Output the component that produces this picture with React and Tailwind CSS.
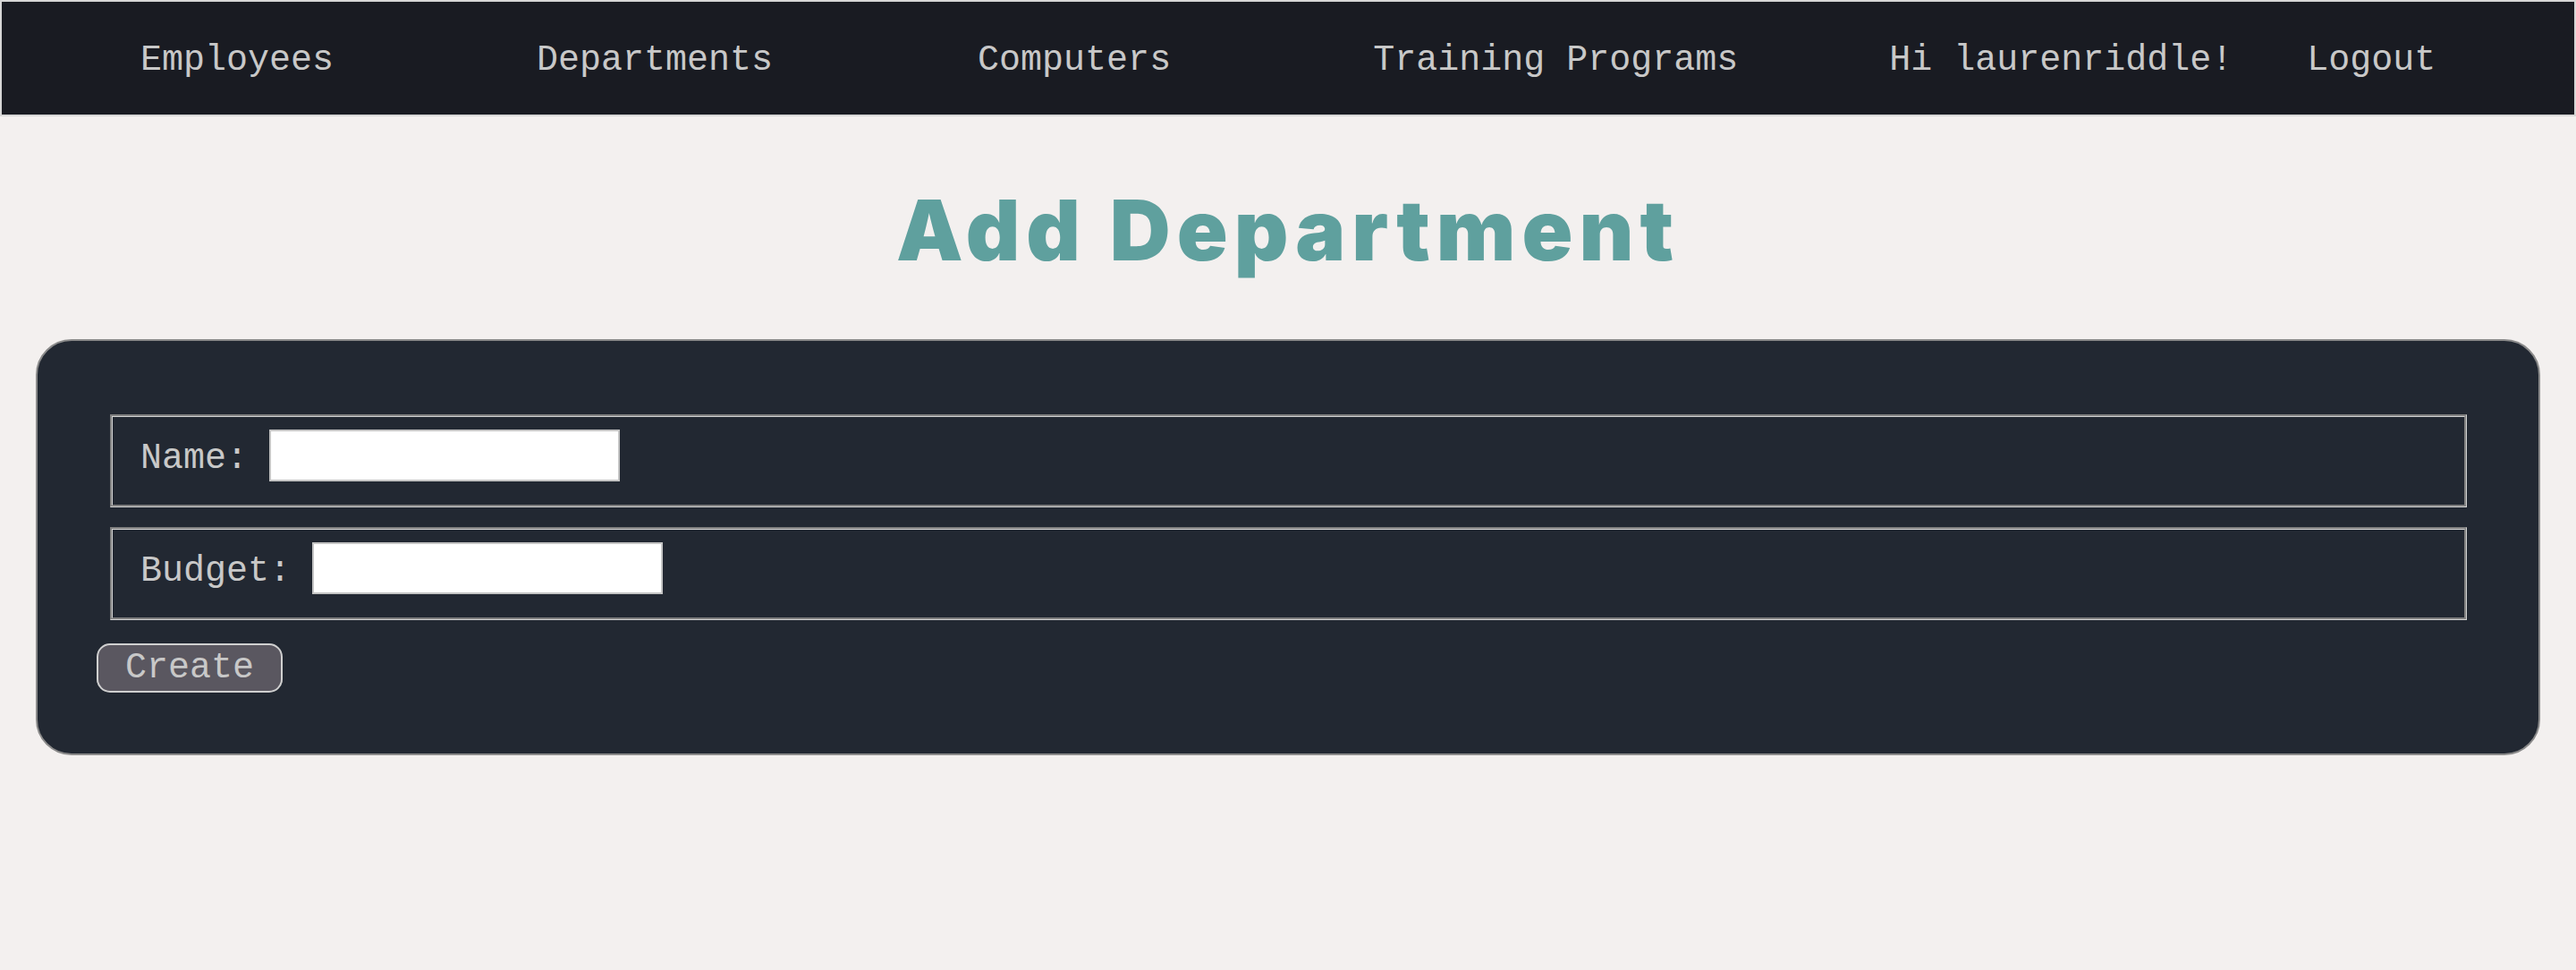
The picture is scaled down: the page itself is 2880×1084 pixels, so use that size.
export default function App() {
  const mono = { fontFamily: '"Liberation Mono", "Courier New", monospace' };
  return (
    <div className="min-h-screen bg-[#f3f0ef]" style={mono}>
      <nav className="h-[130px] border-2 border-[#d6d6d6] bg-[#191b22] flex items-center pt-[5px] pl-[155px] text-[40px] leading-none text-[#c8c8c8] font-['Liberation_Mono',monospace]">
        <span>Employees</span>
        <span className="ml-[227px]">Departments</span>
        <span className="ml-[229px]">Computers</span>
        <span className="ml-[226px]">Training Programs</span>
        <span className="ml-[169px]">Hi laurenriddle!</span>
        <span className="ml-[83px]">Logout</span>
      </nav>

      <h1 className="mt-[80px] mb-[75px] text-center text-[94px] leading-none font-black text-[#5fa09e] font-['Inter',sans-serif] tracking-[7px]">
        Add Department
      </h1>

      <div className="mx-[40px] rounded-[40px] border-2 border-[#8a8a8a] bg-[#222832] pt-[82px] pb-[68px] px-[66px] font-['Liberation_Mono',monospace]">
        <div className="flex flex-col gap-[22px] ml-[15px] mr-[14px]">
          <div className="h-[104px] border-[3px] [border-style:groove] border-[#d4d4d4] flex items-start pt-[14px] pl-[31px]">
            <label className="mt-[13px] text-[40px] leading-none text-[#c8c8c8] whitespace-pre">Name: </label>
            <div className="w-[392px] h-[58px] bg-white border-2 border-[#c4c4c4]" />
          </div>
          <div className="h-[104px] border-[3px] [border-style:groove] border-[#d4d4d4] flex items-start pt-[14px] pl-[31px]">
            <label className="mt-[13px] text-[40px] leading-none text-[#c8c8c8] whitespace-pre">Budget: </label>
            <div className="w-[392px] h-[58px] bg-white border-2 border-[#c4c4c4]" />
          </div>
        </div>
        <button className="mt-[26px] w-[208px] h-[55px] rounded-[15px] border-2 border-[#d0d0d0] bg-[#5a5760] flex items-center justify-center text-[40px] leading-none text-[#c8c8c8] font-['Liberation_Mono',monospace]">
          Create
        </button>
      </div>
    </div>
  );
}
